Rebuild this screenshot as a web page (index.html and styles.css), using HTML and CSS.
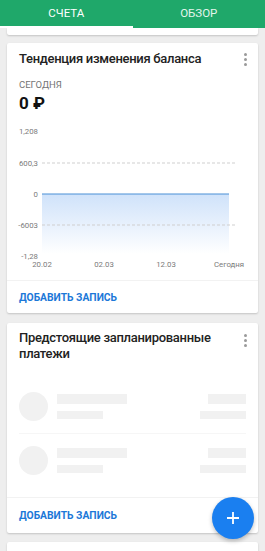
FILE: index.html
```html
<!DOCTYPE html>
<html lang="ru">
<head>
<meta charset="utf-8">
<link rel="stylesheet" href="styles.css">
</head>
<body>
<div class="app">
  <div class="tabs">
    <div class="tab active">СЧЕТА</div>
    <div class="tab">ОБЗОР</div>
  </div>
  <div class="content">
    <div class="card stub"></div>

    <div class="card c1">
      <div class="card-head">
        <div class="title">Тенденция изменения баланса</div>
        <div class="dots"><span></span><span></span><span></span></div>
      </div>
      <div class="today">СЕГОДНЯ</div>
      <div class="amount">0 ₽</div>
      <svg class="chart" width="251" height="154" viewBox="0 0 251 154">
        <defs>
          <linearGradient id="fill" x1="0" y1="0" x2="0" y2="1">
            <stop offset="0" stop-color="#cfe2fa"/>
            <stop offset="1" stop-color="#ffffff"/>
          </linearGradient>
        </defs>
        <rect x="35" y="76" width="187" height="60" fill="url(#fill)"/>
        <line x1="35" y1="45" x2="229" y2="45" class="dash"/>
        <line x1="35" y1="107" x2="229" y2="107" class="dash"/>
        <line x1="35" y1="76" x2="222" y2="76" class="zero"/>
        <g class="ylab">
          <text x="31" y="16">1,208</text>
          <text x="31" y="48">600,3</text>
          <text x="31" y="79">0</text>
          <text x="31" y="110">-6003</text>
          <text x="31" y="141">-1,28</text>
        </g>
        <g class="xlab">
          <text x="35" y="149">20.02</text>
          <text x="97" y="149">02.03</text>
          <text x="159" y="149">12.03</text>
          <text x="222" y="149">Сегодня</text>
        </g>
      </svg>
      <div class="action">ДОБАВИТЬ ЗАПИСЬ</div>
    </div>

    <div class="card c2">
      <div class="card-head two">
        <div class="title">Предстоящие запланированные платежи</div>
        <div class="dots"><span></span><span></span><span></span></div>
      </div>
      <div class="skeletons">
        <div class="sk-row">
          <div class="sk-circle"></div>
          <div class="sk-left"><div class="sk a"></div><div class="sk b"></div></div>
          <div class="sk-right"><div class="sk c"></div><div class="sk d"></div></div>
        </div>
        <div class="sk-row">
          <div class="sk-circle"></div>
          <div class="sk-left"><div class="sk a"></div><div class="sk b"></div></div>
          <div class="sk-right"><div class="sk c"></div><div class="sk d"></div></div>
        </div>
      </div>
      <div class="action">ДОБАВИТЬ ЗАПИСЬ</div>
    </div>

    <div class="card stub2"></div>
  </div>
  <div class="fab">
    <svg width="14" height="14" viewBox="0 0 14 14"><path d="M7 1v12M1 7h12" stroke="#fff" stroke-width="1.8" fill="none"/></svg>
  </div>
</div>
</body>
</html>
```
FILE: styles.css
```css
* { box-sizing: border-box; }
html, body { margin: 0; padding: 0; }
body {
  width: 265px;
  height: 551px;
  overflow: hidden;
  background: #eeeeee;
  font-family: Roboto, "Noto Sans", sans-serif;
  color: #212121;
}
.app { position: relative; width: 265px; height: 551px; overflow: hidden; }
.tabs {
  height: 28px;
  background: #1fa86a;
  display: flex;
  position: relative;
  z-index: 2;
}
.tab {
  flex: 1;
  color: #e4f5ec;
  font-size: 11.5px;
  text-align: center;
  line-height: 26px;
  border-bottom: 2px solid transparent;
}
.tab.active { border-bottom-color: #ffffff; color: #ffffff; }
.content {
  display: flex;
  flex-direction: column;
  padding: 0 7px;
}
.card {
  background: #fff;
  border-radius: 2px;
  box-shadow: 0 1px 2px rgba(0,0,0,0.18);
}
.stub { height: 7px; border-radius: 0 0 2px 2px; }
.c1 { margin-top: 8px; height: 270px; }
.c2 { margin-top: 10px; height: 210px; display: flex; flex-direction: column; }
.stub2 { margin-top: 9px; height: 40px; }
.card-head {
  display: flex;
  justify-content: space-between;
  padding: 0 11px 0 12px;
  height: 31px;
  align-items: center;
}
.card-head.two {
  height: auto;
  padding-top: 7px;
  align-items: flex-start;
}
.title {
  font-size: 13px;
  font-weight: 500;
  line-height: 16px;
  letter-spacing: -0.3px;
  color: #222;
}
.card-head.two .title { width: 222px; }
.dots {
  display: flex;
  flex-direction: column;
  gap: 2px;
  padding-top: 1px;
}
.card-head.two .dots { padding-top: 4px; }
.dots span {
  width: 3px; height: 3px; border-radius: 50%;
  background: #9a9a9a;
}
.today {
  margin: 5px 12px 0;
  font-size: 9.5px;
  line-height: 12px;
  color: #757575;
}
.amount {
  margin: 1px 12px 0;
  font-size: 17px;
  font-weight: 700;
  line-height: 22px;
  color: #111;
}
.chart { display: block; margin-top: 4px; }
.dash { stroke: #cfcfcf; stroke-width: 1; stroke-dasharray: 3 2; }
.zero { stroke: #4a8fd6; stroke-width: 1.2; }
.ylab text { font-size: 7.8px; fill: #7a7a7a; text-anchor: end; font-family: Roboto, sans-serif; }
.xlab text { font-size: 7.8px; fill: #7a7a7a; text-anchor: middle; font-family: Roboto, sans-serif; }
.action {
  border-top: 1px solid #f2f2f2;
  margin-top: 8px;
  height: 33px;
  padding: 0 12px;
  line-height: 33px;
  font-size: 10.3px;
  font-weight: 700;
  color: #1c78d8;
}
.c2 .action { margin-top: auto; height: 36px; line-height: 36px; }
.skeletons { margin-top: 17px; padding: 0 12px; }
.sk-row {
  display: flex;
  align-items: center;
  height: 54px;
}
.sk-row + .sk-row { border-top: 1px solid #f6f6f6; }
.sk-circle {
  width: 29px; height: 29px; border-radius: 50%;
  background: #f1f1f1;
  flex: none;
}
.sk-left { margin-left: 9px; display: flex; flex-direction: column; gap: 7px; flex: 1; }
.sk-right { display: flex; flex-direction: column; gap: 7px; align-items: flex-end; }
.sk { background: #f1f1f1; }
.sk.a { width: 70px; height: 10px; }
.sk.b { width: 46px; height: 8px; }
.sk.c { width: 38px; height: 10px; }
.sk.d { width: 46px; height: 8px; }
.fab {
  position: absolute;
  left: 212px;
  top: 497px;
  width: 42px;
  height: 42px;
  border-radius: 50%;
  background: #1a7ff0;
  box-shadow: 0 2px 4px rgba(0,0,0,0.25);
  display: flex;
  align-items: center;
  justify-content: center;
}
.fab svg { display: block; }
```
